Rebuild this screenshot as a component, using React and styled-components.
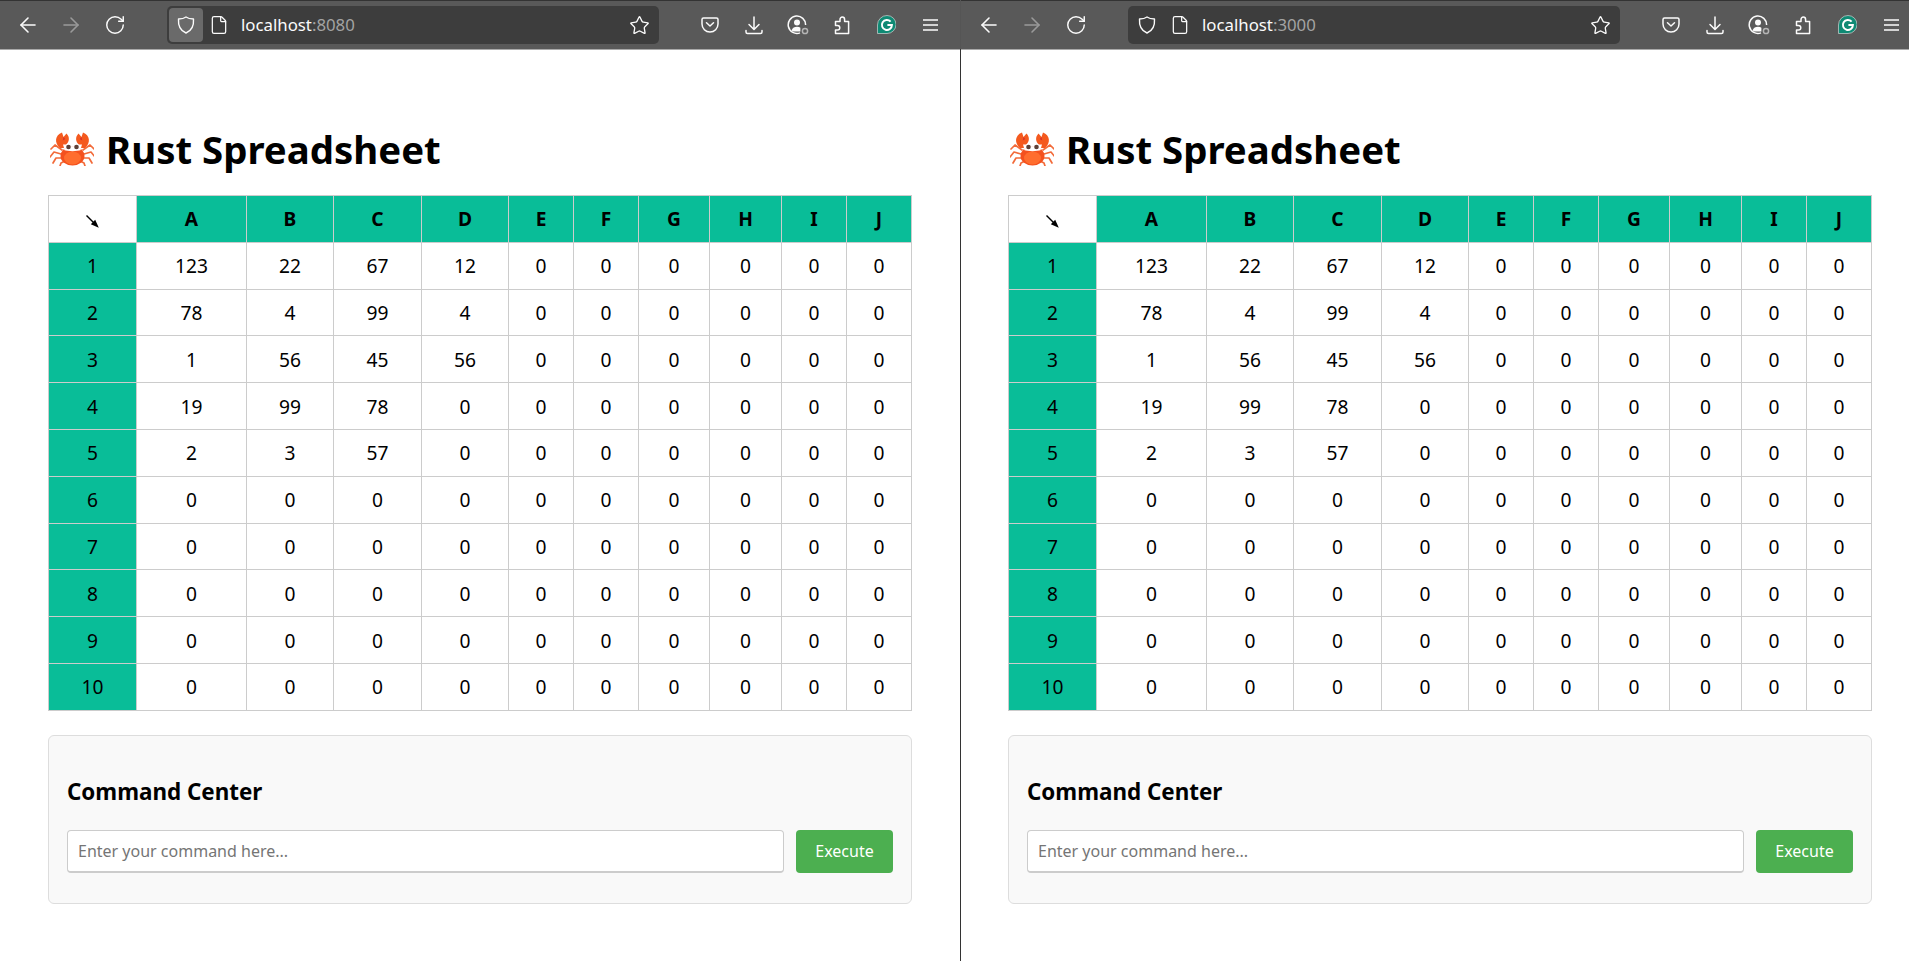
import React from 'react';
import styled, { createGlobalStyle } from 'styled-components';
import { ArrowLeft, ArrowRight, RotateCw, File, Star } from 'lucide-react';

const GlobalStyle = createGlobalStyle`
  html, body {
    margin: 0;
    height: 100%;
    overflow: hidden;
    background: #fff;
    font-family: "Noto Sans", "Open Sans", sans-serif;
  }
`;

const Desktop = styled.div`
  display: flex;
  width: 1909px;
  height: 961px;
  overflow: hidden;
`;

const Window = styled.div`
  flex: 0 0 960px;
  width: 960px;
  height: 961px;
  background: #fff;
`;

const Divider = styled.div`
  flex: 0 0 1px;
  background: linear-gradient(#555 0, #555 49px, #333 49px);
`;

const Toolbar = styled.div`
  display: flex;
  align-items: center;
  height: 50px;
  box-sizing: border-box;
  padding-left: 6px;
  background: #595959;
  border-top: 1px solid #333;
  border-bottom: 1px solid #aaa;
  color: #fbfbfb;
`;

const NavButton = styled.span`
  display: flex;
  justify-content: center;
  flex: 0 0 43.5px;
  color: ${(p) => (p.$dim ? '#9a9a9a' : '#fbfbfb')};
`;

const UrlBar = styled.div`
  display: flex;
  flex: 0 0 492px;
  align-items: center;
  height: 38px;
  margin-left: 30.5px;
  padding: 2px;
  box-sizing: border-box;
  background: #3d3d3d;
  border-radius: 5px;
`;

const ShieldBox = styled.span`
  display: flex;
  align-items: center;
  justify-content: center;
  width: 34px;
  height: 34px;
  border-radius: 4px;
  background: ${(p) => (p.$active ? '#6a6a6a' : 'transparent')};
`;

const PageIcon = styled.span`
  display: flex;
  margin-left: 6px;
`;

const UrlText = styled.span`
  margin: 0 0 2px 12px;
  flex: 1;
  font-size: 16.8px;
  color: #fbfbfb;
`;

const UrlPort = styled.span`
  color: #a3a3a3;
`;

const StarIcon = styled.span`
  display: flex;
  margin-right: 7px;
`;

const ToolGroup = styled.div`
  display: flex;
  flex: none;
  align-items: center;
  margin-left: 29px;
`;

const ToolIcon = styled.span`
  display: flex;
  justify-content: center;
  width: 44px;
`;

const Content = styled.main`
  padding-left: ${(p) => p.$inset}px;
  width: 864px;
`;

const Title = styled.h1`
  display: flex;
  align-items: center;
  gap: 12px;
  margin: 0;
  padding: 73px 0 20px 2px;
  font-size: 38.4px;
  line-height: 52px;
  font-weight: 700;
  color: #000;
`;

const Sheet = styled.table`
  width: 863px;
  table-layout: fixed;
  border-collapse: collapse;
  font-size: 19.2px;
  color: #000;
`;

const HeaderCell = styled.th`
  height: 45.8px;
  padding: 0;
  border: 1px solid #ccc;
  text-align: center;
  font-weight: 700;
  background: #09bd98;
`;

const CornerCell = styled.th`
  height: 45.8px;
  padding: 6px 0 0;
  box-sizing: border-box;
  border: 1px solid #ccc;
  background: #fff;
  svg {
    display: block;
    margin: 0 auto;
  }
`;

const RowHeader = styled.td`
  padding: 0;
  border: 1px solid #ccc;
  text-align: center;
  background: #09bd98;
`;

const Cell = styled.td`
  height: 45.8px;
  padding: 0;
  border: 1px solid #ccc;
  text-align: center;
`;

const CommandCard = styled.section`
  margin-top: 24px;
  height: 169px;
  box-sizing: border-box;
  padding: 37px 18px 0;
  background: #f9f9f9;
  border: 1px solid #ddd;
  border-radius: 6px;
`;

const CommandTitle = styled.h3`
  margin: 0 0 19px;
  font-size: 22.4px;
  line-height: 38px;
  font-weight: 700;
  color: #000;
`;

const CommandForm = styled.div`
  display: flex;
  gap: 12px;
`;

const CommandInput = styled.input`
  flex: 1;
  height: 43px;
  box-sizing: border-box;
  padding: 1px 10px 0;
  background: #fff;
  border: 1px solid #ccc;
  border-bottom-width: 2px;
  border-radius: 4px;
  font-family: inherit;
  font-size: 16px;
  &::placeholder {
    color: #757575;
  }
`;

const ExecuteButton = styled.button`
  width: 97px;
  height: 43px;
  padding: 0;
  border: none;
  border-radius: 4px;
  background: #4caf50;
  color: #fff;
  font-family: inherit;
  font-size: 16px;
`;

const columns = ['A', 'B', 'C', 'D', 'E', 'F', 'G', 'H', 'I', 'J'];
const widths = [88, 110, 87, 88, 87, 65, 65, 71, 72, 65, 65];

const filled = [
  [123, 22, 67, 12],
  [78, 4, 99, 4],
  [1, 56, 45, 56],
  [19, 99, 78, 0],
  [2, 3, 57, 0],
];

const rows = Array.from({ length: 10 }, (_, r) =>
  columns.map((_, c) => (filled[r] && filled[r][c]) || 0)
);

const ShieldIcon = () => (
  <svg width="18" height="18" viewBox="0 0 18 18" fill="none" stroke="currentColor" strokeWidth="1.4" strokeLinejoin="round">
    <path d="M9 1C11 2.5 14 3 16.5 3 17 10 14 15 9 17 4 15 1 10 1.5 3 4 3 7 2.5 9 1Z" />
  </svg>
);

const PocketIcon = () => (
  <svg width="18" height="16" viewBox="0 0 18 16" fill="none" stroke="currentColor" strokeWidth="1.5" strokeLinecap="round" strokeLinejoin="round">
    <path d="M2.5 1h13A1.5 1.5 0 0 1 17 2.5V7A8 8 0 0 1 1 7V2.5A1.5 1.5 0 0 1 2.5 1z" />
    <path d="M5.5 5.8L9 9l3.5-3.2" />
  </svg>
);

const DownloadIcon = () => (
  <svg width="18" height="19" viewBox="0 0 18 19" fill="none" stroke="currentColor" strokeWidth="1.5" strokeLinecap="round" strokeLinejoin="round">
    <path d="M9 1v12M4 8.5l5 5 5-5" />
    <path d="M1 14.5V16a1.5 1.5 0 0 0 1.5 1.5h13A1.5 1.5 0 0 0 17 16v-1.5" />
  </svg>
);

const AccountIcon = () => (
  <svg width="22" height="20" viewBox="0 0 22 20" fill="none" stroke="currentColor" strokeWidth="1.5">
    <path d="M13 17.9A8.7 8.7 0 1 1 18.6 10" />
    <circle cx="10" cy="7.5" r="3" fill="currentColor" stroke="none" />
    <path d="M4.5 15.5c1-2.8 3-3.7 5.5-3.7 1.5 0 2.6.3 3.4.9v3.900H6.500z" fill="currentColor" stroke="none" />
    <circle cx="18" cy="16" r="2.6" stroke="#b5b5b5" strokeWidth="1.5" />
  </svg>
);

const PuzzleIcon = () => (
  <svg width="16" height="19" viewBox="0 0 16 19" fill="none" stroke="currentColor" strokeWidth="1.5" strokeLinejoin="round">
    <path d="M6 5.5V3.4a2.3 2.3 0 0 1 4.6 0v2.1h4V17.5H1.5V14h2a2.3 2.3 0 0 0 0-4.6h-2V5.5z" />
  </svg>
);

const GrammarlyIcon = () => (
  <svg width="19" height="20" viewBox="0 0 19 20">
    <path d="M10 .5a9 9 0 0 1 0 18H.5V10A9.5 9.5 0 0 1 10 .5z" fill="#0f8a74" stroke="#e8e8e8" strokeWidth=".6" />
    <path d="M13.6 6.6A5 5 0 1 0 14.9 10H10.4" fill="none" stroke="#fff" strokeWidth="2" />
  </svg>
);

const MenuIcon = () => (
  <svg width="15" height="12" viewBox="0 0 15 12" stroke="currentColor" strokeWidth="1.5">
    <path d="M0 1h15M0 6h15M0 11h15" />
  </svg>
);

const CornerArrow = () => (
  <svg width="13" height="13" viewBox="0 0 13 13">
    <path d="M.5.5L8 8" stroke="#000" strokeWidth="1.4" />
    <path d="M12.8 12.8L4.8 9.2 9.2 4.8z" fill="#000" />
  </svg>
);

const CrabIcon = () => (
  <svg width="44" height="34" viewBox="0 0 44 34">
    <g id="crab-side">
      <path d="M12 18L5 13 1 17M11 22L4 20 0 25M12 26L6 26 3 31M15 29L11 31 10 34" fill="none" stroke="#f26b3a" strokeWidth="1.7" strokeLinecap="round" strokeLinejoin="round" />
      <path d="M10 16C4 11 5 3 12 .5L13.5 5 16.5 1.5C20 5 19.5 10 16 12.5L13 12.5 14 16z" fill="#f4591e" />
      <path d="M13.5 5L12.8 8.5 15.2 7z" fill="#d32f2f" />
    </g>
    <use href="#crab-side" transform="matrix(-1 0 0 1 45 0)" />
    <ellipse cx="22.5" cy="24" rx="12" ry="9.5" fill="#f4511e" />
    <ellipse cx="22.5" cy="26" rx="8.5" ry="6.5" fill="#ff6d2e" />
    <path d="M14 18c2-5 15-5 17 0-4 1.5-13 1.5-17 0z" fill="#fff" />
    <circle cx="18.5" cy="15" r="2.3" fill="#5d4037" />
    <circle cx="26.5" cy="15" r="2.3" fill="#5d4037" />
  </svg>
);

function BrowserBar({ port, activeShield }) {
  return (
    <Toolbar>
      <NavButton><ArrowLeft size={24} strokeWidth={1.6} /></NavButton>
      <NavButton $dim><ArrowRight size={24} strokeWidth={1.6} /></NavButton>
      <NavButton><RotateCw size={22} strokeWidth={1.6} /></NavButton>
      <UrlBar>
        <ShieldBox $active={activeShield}><ShieldIcon /></ShieldBox>
        <PageIcon><File size={20} strokeWidth={1.5} /></PageIcon>
        <UrlText>localhost<UrlPort>:{port}</UrlPort></UrlText>
        <StarIcon><Star size={21} strokeWidth={1.5} /></StarIcon>
      </UrlBar>
      <ToolGroup>
        <ToolIcon><PocketIcon /></ToolIcon>
        <ToolIcon><DownloadIcon /></ToolIcon>
        <ToolIcon><AccountIcon /></ToolIcon>
        <ToolIcon><PuzzleIcon /></ToolIcon>
        <ToolIcon><GrammarlyIcon /></ToolIcon>
        <ToolIcon><MenuIcon /></ToolIcon>
      </ToolGroup>
    </Toolbar>
  );
}

function SpreadsheetApp({ inset }) {
  return (
    <Content $inset={inset}>
      <Title><CrabIcon />Rust Spreadsheet</Title>
      <Sheet>
        <colgroup>
          {widths.map((w, i) => <col key={i} width={w} />)}
        </colgroup>
        <thead>
          <tr>
            <CornerCell><CornerArrow /></CornerCell>
            {columns.map((c) => <HeaderCell key={c}>{c}</HeaderCell>)}
          </tr>
        </thead>
        <tbody>
          {rows.map((row, r) => (
            <tr key={r}>
              <RowHeader>{r + 1}</RowHeader>
              {row.map((v, c) => <Cell key={c}>{v}</Cell>)}
            </tr>
          ))}
        </tbody>
      </Sheet>
      <CommandCard>
        <CommandTitle>Command Center</CommandTitle>
        <CommandForm>
          <CommandInput placeholder="Enter your command here..." />
          <ExecuteButton>Execute</ExecuteButton>
        </CommandForm>
      </CommandCard>
    </Content>
  );
}

export default function App() {
  return (
    <>
      <GlobalStyle />
      <Desktop>
        <Window>
          <BrowserBar port="8080" activeShield />
          <SpreadsheetApp inset={48} />
        </Window>
        <Divider />
        <Window>
          <BrowserBar port="3000" />
          <SpreadsheetApp inset={47} />
        </Window>
      </Desktop>
    </>
  );
}
